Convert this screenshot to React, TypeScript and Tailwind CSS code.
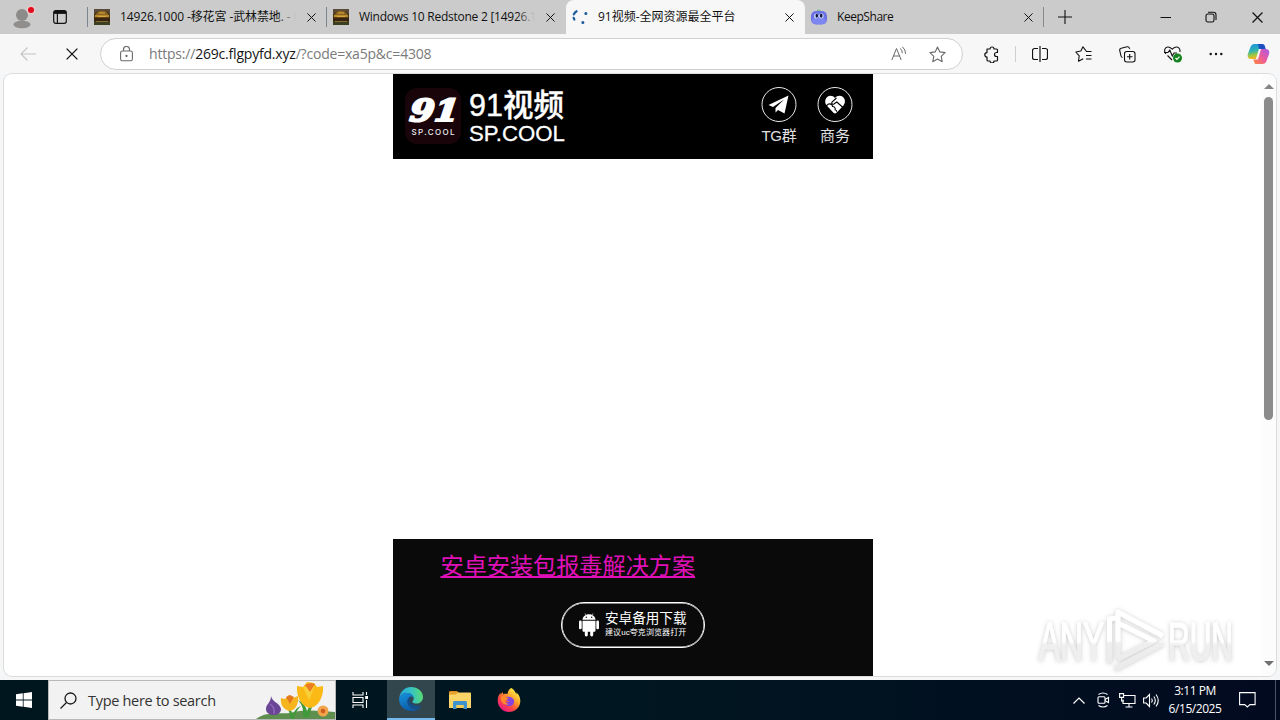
import type { ReactNode } from "react"

function CloseIcon({ size = 9 }: { size?: number }) {
  return (
    <svg width={size} height={size} viewBox="0 0 10 10" fill="none" stroke="#111" strokeWidth="1.1">
      <path d="M0.5 0.5 9.5 9.5M9.5 0.5 0.5 9.5" />
    </svg>
  )
}

function TempleIcon() {
  return (
    <svg width="16" height="16" viewBox="0 0 16 16">
      <rect width="16" height="16" fill="#4a3a1c" />
      <path d="M0 0h16v5l-3-3H4L0 5z" fill="#5b4a3a" />
      <path d="M1.5 6 4 2.500q4-1.500 8 0L14.500 6z" fill="#8a6420" />
      <path d="M1 6h14v2.500H1z" fill="#b98a2c" />
      <path d="M5 3.500h6v1H5zM4 7h8v1H4z" fill="#d9a93f" />
      <path d="M0 8.500h16V12H0z" fill="#3a2410" />
      <path d="M2 12h12v1H2z" fill="#7d7038" />
      <path d="M0 13h16v3H0z" fill="#3d4020" />
    </svg>
  )
}

function SpinnerIcon() {
  return (
    <svg width="16" height="16" viewBox="0 0 16 16" fill="none" stroke="#1f5f9e" strokeLinecap="round">
      <path d="M4.6 2.2A7 7 0 0 0 1.8 5.4M1.6 8.8l.8 1.8" strokeWidth="2.2" />
      <path d="M13.8 4.6h.1M10.8 13.4h.1" strokeWidth="3" />
    </svg>
  )
}

function KeepShareIcon() {
  return (
    <svg width="16" height="16" viewBox="0 0 16 16">
      <path d="M8 3C6 3 5 1 7 .6c1-.1 2 .5 3 .2L9 3z" fill="#7fbf8a" />
      <rect x="0" y="2" width="16" height="13.5" rx="5" fill="#6c72e6" />
      <rect x="1" y="9" width="14" height="6" rx="3" fill="#7e86f0" />
      <ellipse cx="5.4" cy="7" rx="2.3" ry="2.6" fill="#cfe0ff" />
      <ellipse cx="10.4" cy="7" rx="2.3" ry="2.6" fill="#cfe0ff" />
      <ellipse cx="5.8" cy="6.8" rx="1.3" ry="2" fill="#14183c" />
      <ellipse cx="10.2" cy="6.8" rx="1.3" ry="2" fill="#14183c" />
    </svg>
  )
}

type TabProps = { icon: ReactNode; title: string; tracking?: string; fade?: boolean; active?: boolean }

function Tab({ icon, title, tracking = "", fade, active }: TabProps) {
  return (
    <div
      className={`flex h-[34px] w-[239px] shrink-0 items-center pl-[6px] ${active ? "rounded-t-lg bg-[#f7f7f7]" : ""}`}
    >
      {icon}
      <div className={`relative ml-[10px] w-[178px] whitespace-nowrap text-[12px] leading-[18px] text-[#111] ${tracking}`}>
        {title}
        {fade && <span className="absolute inset-y-0 -right-1 w-6 bg-linear-to-r from-transparent to-[#cbcbcb] to-75%" />}
      </div>
      <div className="ml-[9px] flex w-[9px] items-center">
        <CloseIcon />
      </div>
    </div>
  )
}

function TabStrip() {
  return (
    <div className="flex h-[34px] items-center bg-[#cbcbcb]">
      <div className="flex w-[87px] items-center pl-[11px]">
        <svg width="26" height="24" viewBox="0 0 26 24">
          <ellipse cx="11" cy="19.500" rx="8.500" ry="3.800" fill="#908e8c" />
          <circle cx="11" cy="10" r="6" fill="#8d8b89" />
          <circle cx="20" cy="5" r="4.600" fill="#e6c9c9" />
          <circle cx="20" cy="5" r="3" fill="#e00b1c" />
        </svg>
        <svg className="ml-[16px]" width="14" height="14" viewBox="0 0 14 14" fill="none" stroke="#111" strokeWidth="1.2">
          <rect x="0.7" y="0.7" width="12.6" height="12.6" rx="2" />
          <path d="M1 2.4h12" strokeWidth="3" />
          <path d="M4.4 3v10" />
        </svg>
      </div>
      <div className="h-5 w-px bg-[#7c8590]" />
      <Tab icon={<TempleIcon />} title="14926.1000 -移花宮 -武林禁地. - P" tracking="tracking-[-0.1px]" fade />
      <div className="-ml-px h-5 w-px bg-[#7c8590]" />
      <Tab icon={<TempleIcon />} title="Windows 10 Redstone 2 [14926.1" tracking="tracking-[-0.25px]" fade />
      <Tab icon={<SpinnerIcon />} title="91视频-全网资源最全平台" active />
      <Tab icon={<KeepShareIcon />} title="KeepShare" tracking="tracking-[-0.45px]" />
      <div className="-ml-px h-5 w-px bg-[#8a8a8a]" />
      <svg className="ml-[14px]" width="14" height="14" viewBox="0 0 14 14" stroke="#111" strokeWidth="1.1">
        <path d="M7 0v14M0 7h14" />
      </svg>
      <div className="ml-auto flex items-center pr-[17px]">
        <svg width="12" height="12" viewBox="0 0 12 12" stroke="#111">
          <path d="M0.5 6.5h10.5" />
        </svg>
        <svg className="ml-[33px]" width="12" height="12" viewBox="0 0 12 12" fill="none" stroke="#111" strokeWidth="1.1">
          <rect x="1" y="3" width="8" height="8" rx="1.8" />
          <path d="M3 1.2h5.4a2.6 2.6 0 0 1 2.6 2.6V9" />
        </svg>
        <div className="ml-[35px]">
          <CloseIcon size={11} />
        </div>
      </div>
    </div>
  )
}

function ToolButton({ children }: { children: ReactNode }) {
  return <div className="flex w-11 shrink-0 items-center justify-center">{children}</div>
}

function CopilotIcon() {
  return (
    <svg width="23" height="22" viewBox="0 0 23 22">
      <defs>
        <linearGradient id="cpA" x1="0" y1="0" x2="0.2" y2="1">
          <stop offset="0" stopColor="#1b8fe8" />
          <stop offset="0.5" stopColor="#2fb4b0" />
          <stop offset="0.8" stopColor="#a6c83a" />
          <stop offset="1" stopColor="#f4b223" />
        </linearGradient>
        <linearGradient id="cpB" x1="1" y1="0" x2="0" y2="1">
          <stop offset="0" stopColor="#a65be8" />
          <stop offset="0.5" stopColor="#ec5a9c" />
          <stop offset="1" stopColor="#ff8a3c" />
        </linearGradient>
      </defs>
      <path d="M7.500 1h8l1.200 4.500H12L9 16H4.500C1.500 16 .2 14 .7 11.500L3.500 4C4.200 2 5.500 1 7.500 1z" fill="url(#cpA)" />
      <path d="M11 1h4.500c1.500 0 2 1 2.500 2.500L18.700 6H12z" fill="#1d4fc0" />
      <path d="M15.500 21h-7.500L6.300 16.500H11L14 6h4.500c3 0 4.200 2 3.700 4.500L19.500 18c-.7 2-2 3-4 3z" fill="url(#cpB)" />
    </svg>
  )
}

function Toolbar() {
  return (
    <div className="flex h-10 items-center bg-[#f7f7f7]">
      <div className="flex w-[100px] items-center pl-5">
        <svg width="16" height="14" viewBox="0 0 16 14" fill="none" stroke="#c4c4c4" strokeWidth="1.1">
          <path d="M16 7H1M7.500 .5 1 7l6.500 6.500" />
        </svg>
        <div className="ml-[30px]">
          <CloseIcon size={12} />
        </div>
      </div>
      <div className="flex h-8 w-[863px] items-center rounded-full border border-[#d0d0d0] bg-white pl-[19px]">
        <svg width="13" height="16" viewBox="0 0 13 16" fill="none" stroke="#6a6a6a" strokeWidth="1.1">
          <rect x="0.6" y="5" width="11.800" height="9.800" rx="1.800" />
          <path d="M3.500 5V3.500a3 3 0 0 1 6 0V5" />
          <circle cx="6.500" cy="10" r="0.600" fill="#555" />
        </svg>
        <div className="ml-[16px] text-[14px] leading-5 tracking-[-0.200px] whitespace-nowrap text-[#7a7a7a]">
          https://<span className="text-[#161616]">269c.flgpyfd.xyz</span>/?code=xa5p&amp;c=4308
        </div>
        <svg className="ml-auto" width="16" height="16" viewBox="0 0 16 16" fill="none" stroke="#6a6a6a" strokeWidth="1">
          <path d="M0.800 14 5.500 2.500 10.200 14M2.400 10h6.200" />
          <path d="M9.300 2.400q2 1.800 2 4.800M11.400.8q3.200 2.800 3.200 7" />
        </svg>
        <svg className="mr-[16px] ml-[22px]" width="17" height="17" viewBox="0 0 17 17" fill="none" stroke="#6a6a6a" strokeWidth="1.1" strokeLinejoin="round">
          <path d="m8.500 1 2.300 4.900 5.300.7-3.900 3.700 1 5.400-4.700-2.600-4.700 2.600 1-5.400L.9 6.600l5.300-.7z" />
        </svg>
      </div>
      <div className="ml-[7px] flex items-center">
        <ToolButton>
          <svg width="16" height="17" viewBox="0 0 16 17" fill="none" stroke="#111" strokeWidth="1.200" strokeLinejoin="round">
            <path d="M3 3h3a2 2 0 0 1 4 0h2.500a1 1 0 0 1 1 1v2.500h-1a2 2 0 0 0 0 4h1V14a1 1 0 0 1-1 1H10a2 2 0 0 1-4 0H4a1 1 0 0 1-1-1v-3a2.200 2.200 0 0 1 0-4.400z" />
          </svg>
        </ToolButton>
        <div className="mx-px h-4 w-px bg-[#d0d0d0]" />
        <ToolButton>
          <svg className="ml-px" width="16" height="16" viewBox="0 0 16 16" fill="none" stroke="#111" strokeWidth="1.200">
            <path d="M6 2.500H2.500a2 2 0 0 0-2 2v7a2 2 0 0 0 2 2H6M10 2.500h3.500a2 2 0 0 1 2 2v7a2 2 0 0 1-2 2H10M8 0v16" />
          </svg>
        </ToolButton>
        <ToolButton>
          <svg className="ml-px" width="17" height="16" viewBox="0 0 17 16" fill="none" stroke="#111" strokeWidth="1.100" strokeLinejoin="round">
            <path d="M16.500 5.500h-5L8 .8 5.800 5 .8 6l3.400 3.800-.7 5.400 4.700-2.400M11 9.500h5.500M11 13h5.500" />
          </svg>
        </ToolButton>
        <ToolButton>
          <svg width="17" height="17" viewBox="0 0 17 17" fill="none" stroke="#111" strokeWidth="1.100">
            <path d="M3.500 11.500A2 2 0 0 1 2 10L.7 4.500A2 2 0 0 1 2.200 2.200L8 .8a2 2 0 0 1 2.400 1.400l.3.800" />
            <rect x="5.500" y="5.500" width="10.500" height="10.500" rx="2.200" />
            <path d="M10.700 8v5.500M8 10.700h5.500" />
          </svg>
        </ToolButton>
        <ToolButton>
          <svg className="ml-1" width="20" height="18" viewBox="0 0 20 18" fill="none" stroke="#111" strokeWidth="1.100">
            <path d="M3 9C.5 6 1.500 2.500 4.500 2 7 1.600 8.500 3.500 9.300 4.200 10 3.500 11.500 1.600 14 2c2.500.5 3.500 3 2.800 5M4.500 10.500l4.500 4.500" />
            <path d="M1 7.500h4L6.800 5l2.500 6 1.700-3h3" />
            <circle cx="14.500" cy="13" r="4.500" fill="#15831d" stroke="none" />
            <path d="m12.500 13 1.400 1.400 2.600-2.700" stroke="#fff" />
          </svg>
        </ToolButton>
        <ToolButton>
          <svg className="ml-[2px]" width="14" height="4" viewBox="0 0 14 4" fill="#111">
            <circle cx="1.700" cy="2" r="1.200" />
            <circle cx="7" cy="2" r="1.200" />
            <circle cx="12.300" cy="2" r="1.200" />
          </svg>
        </ToolButton>
        <div className="ml-[10px]">
          <CopilotIcon />
        </div>
      </div>
    </div>
  )
}

function SiteHeader() {
  return (
    <header className="flex h-[85px] items-center bg-black pr-[20px] pl-[12px]">
      <svg width="56" height="56" viewBox="0 0 56 56" className="mb-px">
        <rect width="56" height="56" rx="12" fill="#180409" />
        <text
          transform="translate(4 33) skewX(-6) scale(1 1.080)"
          fontFamily="'DejaVu Serif', serif"
          fontSize="28"
          fontWeight="700"
          fontStyle="italic"
          textLength="49"
          lengthAdjust="spacingAndGlyphs"
          fill="#fff"
          stroke="#fff"
          strokeWidth="2"
        >
          91
        </text>
        <text x="6.500" y="46.500" fontFamily="Inter, sans-serif" fontSize="8" fontWeight="500" textLength="43" fill="#eee">
          SP.COOL
        </text>
      </svg>
      <div className="ml-2 flex flex-col text-white">
        <div className="pt-px text-[30.500px] leading-[32px] font-medium [-webkit-text-stroke:0.400px_white]">91视频</div>
        <div className="pt-px text-[22.200px] leading-6 [-webkit-text-stroke:0.300px_white]">SP.COOL</div>
      </div>
      <div className="ml-auto flex gap-[20px] text-[15px] leading-5 text-[#e0e0e0]">
        <div className="flex flex-col items-center gap-[3px]">
          <svg width="36" height="36" viewBox="0 0 36 36">
            <circle cx="18" cy="17.500" r="17" fill="none" stroke="#e8e8e8" />
            <path d="M7.500 18 27.500 8.500l-4 18-6.500-3.500-2.500 2.500V21L23 12.500 12 20z" fill="#fff" />
          </svg>
          <span className="tracking-[-0.200px]">TG群</span>
        </div>
        <div className="flex flex-col items-center gap-[3px]">
          <svg width="36" height="36" viewBox="0 0 36 36">
            <circle cx="18" cy="17.500" r="17" fill="none" stroke="#e8e8e8" />
            <path d="M18 11c-2-2.500-5.500-3-7.800-1-2.500 2.200-2.700 6-.3 8.700l6.600 7c.9.900 2.100.9 3 0l6.800-7c2.300-2.600 2.200-6.300-.3-8.600-2.400-2-6-1.700-8 .9z" fill="#fff" />
            <path d="m19.500 11-4.500 4c-1 1.500 1 2.800 2.200 1.800l2.600-1.800 6.200 5.500M9 19l2.500-2c3-.5 4 1 4 2.500 2 0 3 1.500 2.700 3.300 1 .3 1.500 1 1.500 2" fill="none" stroke="#000" strokeWidth="1.100" />
          </svg>
          <span>商务</span>
        </div>
      </div>
    </header>
  )
}

function AndroidIcon() {
  return (
    <svg width="20" height="24" viewBox="0 0 20 24" fill="#fff">
      <path d="M3.500 6.700C3.800 3.500 6.500 1.200 10 1.200s6.200 2.300 6.500 5.500z" />
      <path d="m6 .5 1.500 2.200M14 .5l-1.500 2.200" stroke="#fff" strokeWidth="0.700" />
      <circle cx="7.300" cy="4.300" r="0.700" fill="#0a0a0a" />
      <circle cx="12.700" cy="4.300" r="0.700" fill="#0a0a0a" />
      <path d="M3.500 7.700h13v9.800c0 .8-.5 1.300-1.300 1.300H4.800c-.8 0-1.300-.5-1.300-1.300z" />
      <rect x="0" y="7.500" width="2.700" height="8.800" rx="1.300" />
      <rect x="17.300" y="7.500" width="2.700" height="8.800" rx="1.300" />
      <rect x="5.800" y="15" width="3" height="8.500" rx="1.400" />
      <rect x="11.200" y="15" width="3" height="8.500" rx="1.400" />
    </svg>
  )
}

function SiteFooter() {
  return (
    <footer className="flex h-[137px] flex-col bg-[#0a0a0a]">
      <a className="mt-[10px] ml-[47.500px] self-start text-[23.150px] leading-[34px] text-[#e010b8] underline decoration-2 underline-offset-[2px]">
        安卓安装包报毒解决方案
      </a>
      <div className="mt-[19px] flex h-[46px] w-[144px] items-center self-center rounded-full border border-white pl-[17px] text-white shadow-[inset_0_0_0_0.500px_#fff]">
        <AndroidIcon />
        <div className="-mt-[2px] ml-[6px] flex flex-col whitespace-nowrap">
          <span className="text-[13.600px] leading-4">安卓备用下载</span>
          <span className="text-[8px] leading-[11px] tracking-[0.080px]">建议uc夸克浏览器打开</span>
        </div>
      </div>
    </footer>
  )
}

function Watermark() {
  return (
    <svg className="absolute top-[600px] left-[1024px]" width="224" height="84" viewBox="-10 -6 224 84">
      <defs>
        <filter id="wmShadow" x="-10%" y="-20%" width="120%" height="140%">
          <feDropShadow dx="0" dy="0.500" stdDeviation="2" floodColor="#666" floodOpacity="0.360" />
        </filter>
        <linearGradient id="wmFill" gradientUnits="userSpaceOnUse" x1="0" y1="0" x2="0" y2="72">
          <stop offset="0" stopColor="#fff" />
          <stop offset="0.480" stopColor="#fff" />
          <stop offset="0.520" stopColor="#eee" />
          <stop offset="1" stopColor="#e9e9e9" />
        </linearGradient>
        <linearGradient id="wmText" x1="0" y1="0" x2="0" y2="1">
          <stop offset="0.500" stopColor="#fff" />
          <stop offset="0.560" stopColor="#efefef" />
        </linearGradient>
      </defs>
      <g filter="url(#wmShadow)">
        <g
          fill="url(#wmText)"
          stroke="url(#wmText)"
          strokeWidth="0.800"
          fontFamily="'Liberation Sans Narrow', 'Liberation Sans', sans-serif"
          fontSize="34"
        >
          <text transform="translate(5 54) scale(1 1.560)" textLength="65" lengthAdjust="spacingAndGlyphs">ANY</text>
          <text transform="translate(134 54) scale(1 1.560)" textLength="65" lengthAdjust="spacingAndGlyphs">RUN</text>
        </g>
        <g fill="none" stroke="url(#wmFill)" strokeWidth="5" strokeLinejoin="round">
          <path d="M75.500 57V13l7-1" />
          <path d="M84 53V6l45 24" />
          <path d="M84 17l36 18-36 18" />
          <path d="M81 63l48-26" />
        </g>
      </g>
    </svg>
  )
}

function PageView() {
  return (
    <div className="flex h-[606px] bg-[#f5f6f8] px-1 pb-1">
      <div className="flex w-full overflow-hidden rounded-lg bg-white shadow-[0_0_0_1px_#dcdcdc]">
        <main className="flex w-[1258px] justify-center">
          <div className="flex w-[480px] flex-col justify-between">
            <SiteHeader />
            <SiteFooter />
          </div>
        </main>
        <div className="flex w-[14px] flex-col items-center bg-[#fcfcfc] pt-[10px] pr-px pb-[10px]">
          <svg width="10" height="5" viewBox="0 0 10 5" fill="#858585">
            <path d="M0 5 5 0l5 5z" />
          </svg>
          <div className="mt-2 h-[323px] w-[9px] rounded-full bg-[#8b8b8b]" />
          <svg className="mt-auto" width="10" height="5" viewBox="0 0 10 5" fill="#707070">
            <path d="M0 0h10L5 5z" />
          </svg>
        </div>
      </div>
    </div>
  )
}

function FlowersArt() {
  return (
    <svg className="ml-auto self-end" width="80" height="40" viewBox="0 0 80 40">
      <path d="M1 40c10-8 24-5 34-6 14-4 30-2 45-1v7z" fill="#5f8f4e" />
      <path d="M36 40c-1-6-2-9-6-13 6 2 7 6 8 10 1-5 3-8 8-10-5 5-6 9-7 13z" fill="#3f9a3b" />
      <path d="M48 38c1-10-2-13-5-17 6 3 9 8 9 13 1-7 5-12 11-15-5 6-8 12-9 19z" fill="#3f9a3b" />
      <path d="M16 17c1 6 9 7 10 13 0 4-4 6-7 6-4 0-8-2-8-6 0-5 5-6 5-13z" fill="#6a4596" />
      <path d="M15 25c3 2 5 5 4 10" stroke="#8d66b9" fill="none" strokeWidth="1.500" />
      <path d="M26 19l4 1 4-4 4 3 5-2c1 7-2 14-8 15-6-1-10-6-9-13z" fill="#f6b51e" />
      <path d="M31 18l4 7 4-7-4-2z" fill="#e4781f" />
      <path d="M42 7l6 1 4-5 7 1 3 4 6-1c1 11-5 21-13 22-8-1-14-11-13-22z" fill="#fbb915" />
      <path d="M48 8l6 13 6-15" fill="#f8d13a" />
      <path d="M50 6l5 7 5-8-5-1z" fill="#ea7c22" />
      <circle cx="68" cy="32" r="5.500" fill="#f2a44a" />
      <circle cx="68" cy="32" r="2.300" fill="#cf5d20" />
    </svg>
  )
}

function EdgeIcon() {
  return (
    <svg width="24" height="24" viewBox="0 0 24 24">
      <defs>
        <linearGradient id="edA" x1="0" y1="0.500" x2="1" y2="0.400">
          <stop offset="0" stopColor="#239fd8" />
          <stop offset="0.500" stopColor="#35c1c7" />
          <stop offset="1" stopColor="#5bdc70" />
        </linearGradient>
        <linearGradient id="edB" x1="0" y1="0" x2="0.500" y2="1">
          <stop offset="0" stopColor="#1693df" />
          <stop offset="1" stopColor="#0c59a4" />
        </linearGradient>
      </defs>
      <path d="M.2 11C1 4.500 6 0 12 0c7 0 12 4.800 12 10 0 4-3 6.600-6.600 6.600-2.400 0-4-.9-4-1.900 0-.6 1.300-1.200 1.300-3.200C14.700 8 11 6 8 6 4.500 6 1.500 8 .2 11z" fill="url(#edA)" />
      <path d="M.2 11C1.500 8 4.500 6 8 6c3.500 0 6.500 2 6.700 5-.8-1-2-1.500-3-1.500C9.500 10 8.300 12.500 8.500 15c.3 4 4 7 8 7 2.300 0 4-.7 5.800-1.800C20 22.700 16.500 24 12.500 24 5.500 24-.7 18.500.2 11z" fill="url(#edB)" />
      <path d="M8.500 15c.4 4 4 6.500 8 6.500 2.300 0 4.500-1.500 5.500-3.500-7 2-11-1-11.300-4.500-.1-1.500.3-2.800 1-4C9.500 10 8.300 12.500 8.500 15z" fill="#134f8e" />
    </svg>
  )
}

function FolderIcon() {
  return (
    <svg width="22" height="19" viewBox="0 0 22 19">
      <path d="M0 1.500C0 .7.500 0 1.500 0H8l2 2H0z" fill="#dd8d1b" />
      <path d="M0 1.500h21c.6 0 1 .4 1 1V17H0z" fill="#f9d568" />
      <path d="M0 1.500h9L7 3.500H0z" fill="#e59f28" />
      <path d="M4 18v-6.500c0-.8.700-1.500 1.500-1.500h11c.8 0 1.500.7 1.500 1.500V18h-3.500v-4h-7v4z" fill="#3e93cf" />
      <path d="M7.500 14h7v3h-7z" fill="#f4cc55" />
    </svg>
  )
}

function FirefoxIcon() {
  return (
    <svg width="24" height="24" viewBox="0 0 24 24">
      <defs>
        <linearGradient id="ffA" x1="0.850" y1="0.100" x2="0.200" y2="0.950">
          <stop offset="0" stopColor="#fff04a" />
          <stop offset="0.350" stopColor="#ffa52a" />
          <stop offset="0.650" stopColor="#ff4b40" />
          <stop offset="1" stopColor="#e31587" />
        </linearGradient>
      </defs>
      <path d="M14.500 0c3 2 4 4.500 5 6.500 0-.7 0-1.500-.3-2.200C22 6.500 23.500 10 23.300 13.500 23 19.500 18 24 12 24S.7 19 .7 12.700C.7 9 2 6.500 3.500 4.800v2L5.500 4l.8 2.200c1.500-.6 3-.5 4.200 0C10.500 3 12.500.8 14.500 0z" fill="url(#ffA)" />
      <path d="M7.500 10c3-2 8-1.500 9.300 1.800 1.200 3.400-1.300 6.400-4.600 6.400-3 0-5-2-5-4.700 2 1.500 4 1 5-.2-2.500 0-3-1.800-4.700-3.300z" fill="#8544df" />
      <path d="M4 8.500c2-1 4-.5 5 .7l2.500 1c-.5 1.500-2.500 1.300-3 2.300-.4 2 1 3.500 3.500 3.500-3.500 1.800-7-.5-8-3.500z" fill="#ff8a2b" />
    </svg>
  )
}

function Taskbar() {
  return (
    <div className="flex h-10 items-center bg-linear-to-r from-[#00161f] via-[#001620] to-[#020a20] text-white">
      <div className="flex w-12 items-center justify-center">
        <svg width="16" height="16" viewBox="0 0 16 16" fill="#fff">
          <path d="M0 2.300 6.800 1.300v6.300H0zM7.600 1.200 16 0v7.600H7.600zM0 8.400h6.800v6.300L0 13.700zM7.600 8.400H16V16l-8.400-1.200z" />
        </svg>
      </div>
      <div className="flex h-10 w-72 items-center border border-[#b8b8b8] bg-[#f2f2f2] pl-[11px]">
        <svg width="17" height="17" viewBox="0 0 17 17" fill="none" stroke="#1a1a1a" strokeWidth="1.300">
          <circle cx="10.500" cy="6.500" r="5.500" />
          <path d="M6.500 10.500.5 16.500" />
        </svg>
        <span className="mt-px ml-[11px] text-[14.500px] tracking-[-0.300px] whitespace-nowrap text-[#333]">Type here to search</span>
        <FlowersArt />
      </div>
      <div className="flex w-[51px] items-center justify-center pr-[2px]">
        <svg width="17" height="16" viewBox="0 0 17 16" fill="none" stroke="#fff" strokeWidth="1.100">
          <path d="M1 0v3h10V0M1 16v-3h10v3M1 5.500h10v5H1zM14.500 0v3M14.500 8v8" />
          <path d="M13.200 4h2.800v3h-2.800z" fill="#fff" stroke="none" />
        </svg>
      </div>
      <div className="flex h-10 w-12 items-center justify-center border-b-2 border-[#76b9ed] bg-[#32464e]">
        <EdgeIcon />
      </div>
      <div className="flex w-[49px] items-center justify-center">
        <FolderIcon />
      </div>
      <div className="flex w-[50px] items-center justify-center">
        <FirefoxIcon />
      </div>
      <div className="ml-auto flex h-10 items-center">
        <svg width="12" height="7" viewBox="0 0 12 7" fill="none" stroke="#fff" strokeWidth="1.200">
          <path d="M.5 6.500 6 1l5.500 5.500" />
        </svg>
        <svg className="ml-[12px]" width="13" height="16" viewBox="0 0 13 16" fill="none" stroke="#fff" strokeWidth="1.100">
          <path d="M1.500 2.500q4.500-3 9 0M1.500 13.500q4.500 3 9 0" />
          <rect x="1" y="4.800" width="7" height="6.500" rx="1" />
          <path d="m8 7.500 3.500-2v5L8 8.800" />
        </svg>
        <svg className="ml-[9px]" width="17" height="15" viewBox="0 0 17 15" fill="none" stroke="#fff" strokeWidth="1.100">
          <path d="M5 2.500h11v8H4V6.500M10 10.500V14M6.500 14h7" />
          <path d="M.6.600h4v3.800h-4zM2.600 4.400V8H5" />
        </svg>
        <svg className="ml-[7px]" width="17" height="15" viewBox="0 0 17 15" fill="none" stroke="#fff" strokeWidth="1.100">
          <path d="M.6 5h2.600L6.500 1.500v12L3.200 10H.6zM8.500 5.500q1.500 2 0 4M10.800 3.500q3 4 0 8M13 1.500q4.500 6 0 12" />
        </svg>
        <div className="ml-[5px] flex w-[60px] flex-col items-center text-[12px] leading-[18px] tracking-[-0.450px] whitespace-nowrap">
          <span>3:11 PM</span>
          <span>6/15/2025</span>
        </div>
        <svg className="ml-[14px]" width="17" height="16" viewBox="0 0 17 16" fill="none" stroke="#fff" strokeWidth="1.100">
          <path d="M.6.600h15.500v12H11L8.300 15l-2.600-2.400H.6z" />
        </svg>
        <div className="ml-[19px] h-10 w-px bg-[#4a5568]" />
        <div className="w-1" />
      </div>
    </div>
  )
}

export default function App() {
  return (
    <div className="relative h-[720px] w-[1280px] overflow-hidden bg-[#f7f7f7] font-['Open_Sans','Noto_Sans_CJK_SC',sans-serif]">
      <TabStrip />
      <Toolbar />
      <div className="font-['Liberation_Sans','Noto_Sans_CJK_SC',sans-serif]">
        <PageView />
      </div>
      <Taskbar />
      <Watermark />
    </div>
  )
}
